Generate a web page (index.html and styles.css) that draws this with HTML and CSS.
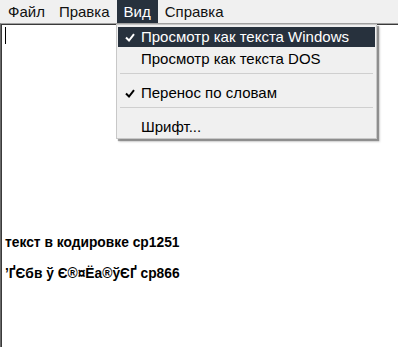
FILE: index.html
```html
<!DOCTYPE html>
<html lang="ru">
<head>
<meta charset="utf-8">
<title>Блокнот</title>
<link rel="stylesheet" href="styles.css">
</head>
<body>
<div class="window">
  <div class="menubar">
    <span class="mi">Файл</span>
    <span class="mi">Правка</span>
    <span class="mi active">Вид</span>
    <span class="mi">Справка</span>
  </div>
  <div class="editor">
    <div class="caret"></div>
    <div class="lines">
      <p class="line">текст в кодировке cp1251</p>
      <p class="line second">’ҐЄбв ў Є®¤Ёа®ўЄҐ cp866</p>
    </div>
  </div>
  <div class="dropdown">
    <div class="item hl">
      <svg class="check" width="10" height="9" viewBox="0 0 10 9"><path d="M1 4.5 L4 7.5 L9 1.2" /></svg>
      <span>Просмотр как текста Windows</span>
    </div>
    <div class="item"><span>Просмотр как текста DOS</span></div>
    <div class="sep"></div>
    <div class="item">
      <svg class="check" width="10" height="9" viewBox="0 0 10 9"><path d="M1 4.5 L4 7.5 L9 1.2" /></svg>
      <span>Перенос по словам</span>
    </div>
    <div class="sep"></div>
    <div class="item"><span>Шрифт...</span></div>
  </div>
</div>
</body>
</html>
```

FILE: styles.css
```css
html, body {
  margin: 0;
  padding: 0;
  background: #ffffff;
}
.window {
  position: relative;
  width: 398px;
  height: 347px;
  overflow: hidden;
  display: flex;
  flex-direction: column;
  font-family: "Liberation Sans", Arial, sans-serif;
}
.menubar {
  height: 23px;
  background: #f0f0f0;
  display: flex;
  padding-left: 1px;
  gap: 0;
  font-size: 15px;
  line-height: 23px;
  color: #111;
}
.mi {
  padding: 0 7px;
}
.mi.active {
  background: #27313d;
  color: #fff;
}
.editor {
  flex: 1;
  background: #fff;
  border-top: 1px solid #a0a0a0;
  border-left: 1px solid #6a6a6a;
  box-shadow: inset 1px 1px 0 #3a3a3a;
  display: flex;
  flex-direction: column;
}
.caret {
  width: 1px;
  height: 17px;
  background: #000;
  margin: 3px 0 0 4px;
}
.lines {
  margin-top: 191px;
  padding-left: 4px;
}
.line {
  margin: 0;
  font-family: "Liberation Sans", Arial, sans-serif;
  font-weight: bold;
  font-size: 13.8px;
  line-height: 16px;
  color: #000;
}
.line.second {
  margin-top: 15px;
}
.dropdown {
  position: absolute;
  left: 116px;
  top: 24px;
  width: 261px;
  box-sizing: border-box;
  background: #f0f0f0;
  border: 1px solid #c8c8c8;
  padding-top: 1px;
  display: flex;
  flex-direction: column;
  box-shadow: 2px 2px 1px rgba(0, 0, 0, 0.35), 3px 3px 2px rgba(0, 0, 0, 0.15);
  font-size: 15px;
  color: #000;
}
.item {
  position: relative;
  height: 20px;
  margin: 1px 1px;
  padding-left: 23px;
  line-height: 20px;
  white-space: nowrap;
}
.item.hl {
  background: #27313d;
  color: #fff;
}
.check {
  position: absolute;
  left: 7px;
  top: 6px;
}
.check path {
  fill: none;
  stroke: #000;
  stroke-width: 2;
}
.item.hl .check path {
  stroke: #fff;
}
.sep {
  height: 12px;
  position: relative;
}
.sep::after {
  content: "";
  position: absolute;
  left: 3px;
  right: 3px;
  top: 3px;
  height: 1px;
  background: #cfcfcf;
}
```
